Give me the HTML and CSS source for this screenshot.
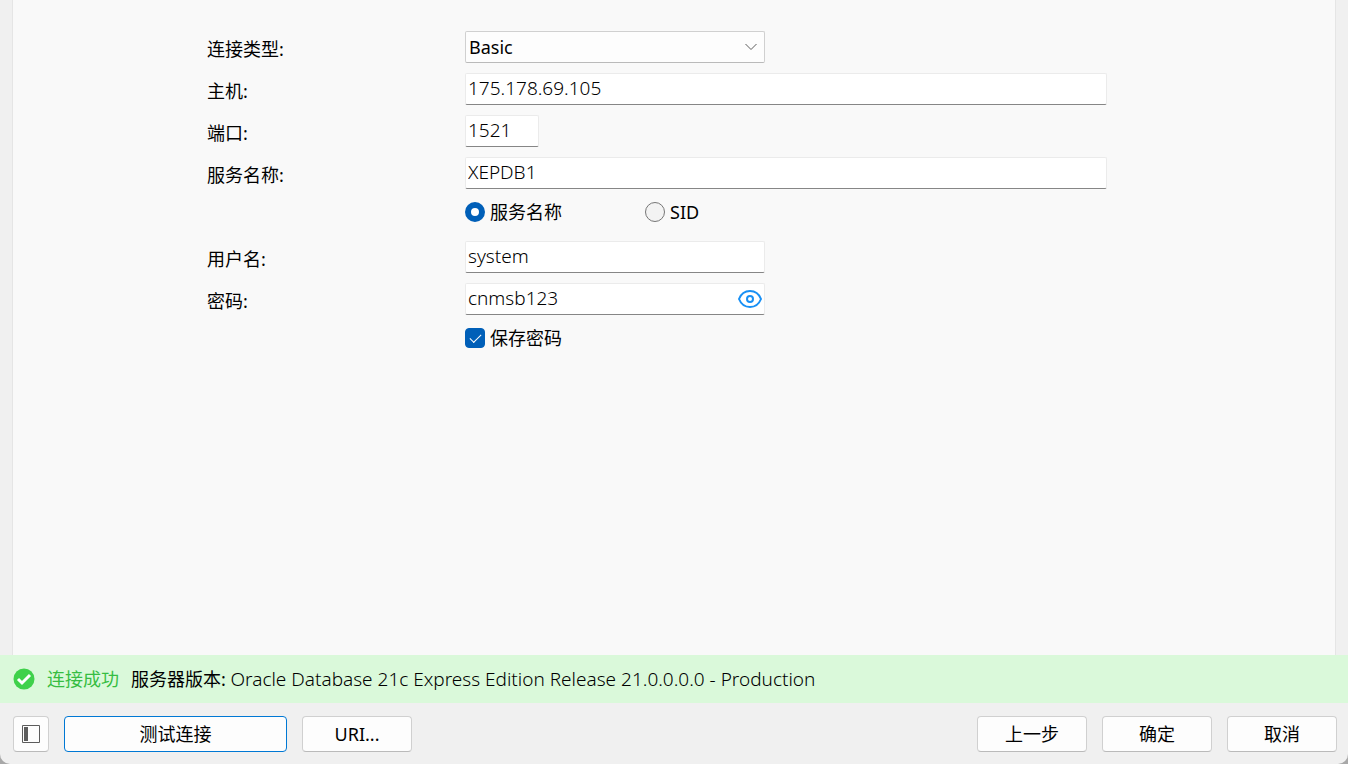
FILE: index.html
```
<!DOCTYPE html>
<html lang="zh-CN">

<head>
    <meta charset="UTF-8" />
    <meta name="viewport" content="width=device-width, initial-scale=1.0" />
    <title>连接</title>
    <link rel="stylesheet" href="styles.css">
</head>

<body>
    <form class="window">
        <!-- Connection settings -->
        <main class="panel">
            <div class="row">
                <label for="conn-type">连接类型:</label>
                <div class="select-box">
                    <select id="conn-type">
                        <option>Basic</option>
                        <option>TNS</option>
                    </select>
                    <svg class="arrow" viewBox="0 0 12 8" aria-hidden="true">
                        <path d="M.5 1L6 6.5 11.5 1" />
                    </svg>
                </div>
            </div>
            <div class="row">
                <label for="host">主机:</label>
                <input type="text" id="host" value="175.178.69.105">
            </div>
            <div class="row">
                <label for="port">端口:</label>
                <input type="text" id="port" class="short" value="1521">
            </div>
            <div class="row">
                <label for="service">服务名称:</label>
                <input type="text" id="service" value="XEPDB1">
            </div>
            <div class="row options">
                <label class="option"><input type="radio" name="mode" checked>服务名称</label>
                <label class="option"><input type="radio" name="mode">SID</label>
            </div>
            <div class="row">
                <label for="user">用户名:</label>
                <input type="text" id="user" class="medium" value="system">
            </div>
            <div class="row">
                <label for="password">密码:</label>
                <div class="password-box">
                    <input type="text" id="password" value="cnmsb123">
                    <button type="button" class="eye" aria-label="显示密码">
                        <svg viewBox="0 0 26 20" aria-hidden="true">
                            <path d="M2 10C4 5 8 2 13 2s9 3 11 8c-2 5-6 8-11 8S4 15 2 10z" />
                            <circle cx="13" cy="10" r="3" />
                        </svg>
                    </button>
                </div>
            </div>
            <div class="row options">
                <label class="option"><input type="checkbox" checked>保存密码</label>
            </div>
        </main>

        <!-- Test result -->
        <div class="status">
            <svg class="ok" viewBox="0 0 22 22" aria-hidden="true">
                <circle cx="11" cy="11" r="10.5" />
                <path d="M5 11l4 4 8-8" />
            </svg>
            <span class="result">连接成功</span>
            <span>服务器版本: <span class="version">Oracle Database 21c Express Edition Release 21.0.0.0.0 - Production</span></span>
        </div>

        <!-- Buttons -->
        <footer class="actions">
            <button type="button" class="btn toggle" aria-label="侧边栏">
                <svg viewBox="0 0 18 18" aria-hidden="true">
                    <path class="frame" d="M.5.5h17v17H.5z" />
                    <path class="side" d="M2 2h4v14H2z" />
                </svg>
            </button>
            <button type="button" class="btn test">测试连接</button>
            <button type="button" class="btn">URI...</button>
            <div class="right">
                <button type="button" class="btn">上一步</button>
                <button type="submit" class="btn">确定</button>
                <button type="button" class="btn">取消</button>
            </div>
        </footer>
    </form>
</body>

</html>
```
FILE: styles.css
```
/* Global Styles */
* {
    box-sizing: border-box;
}

body {
    margin: 0;
    background: #a8a8a8;
    color: #000;
}

body,
input,
select,
button {
    font-family: "Noto Sans", "Noto Sans CJK SC", sans-serif;
    font-size: 18px;
    line-height: 24px;
}

.window {
    display: flex;
    flex-direction: column;
    min-height: 100vh;
    background: #f0f0f0;
    border-radius: 0 0 10px 10px;
}

/* Settings panel */
.panel {
    flex: 1;
    display: flex;
    flex-direction: column;
    gap: 10px;
    margin: 0 12px;
    padding: 31px 228px 10px 194px;
    background: #f9f9f9;
    border: 1px solid #e5e5e5;
    border-width: 0 1px;
}

.row {
    display: grid;
    grid-template-columns: 258px 1fr;
    height: 32px;
}

.row > label {
    padding-top: 6px;
}

input[type="text"],
select {
    width: 100%;
    height: 32px;
    margin: 0;
    padding: 0 2px 2px;
    color: #000;
    background: #fff;
    border: 1px solid #ebebeb;
    border-bottom-color: #868686;
    border-radius: 2px;
    outline: none;
}

input[type="text"],
.version {
    font-size: 19px;
    font-weight: 350;
}

input.short {
    width: 74px;
}

input.medium,
.select-box,
.password-box {
    width: 300px;
}

.select-box,
.password-box {
    position: relative;
}

select {
    appearance: none;
    padding: 0 3px;
    background: #fdfdfd;
    border-color: #d0d0d0;
    border-bottom-color: #bababa;
}

.arrow {
    position: absolute;
    top: 12px;
    right: 8px;
    width: 12px;
    height: 8px;
    fill: none;
    stroke: #5c5c5c;
    pointer-events: none;
}

.eye {
    position: absolute;
    top: 6px;
    right: 2px;
    width: 26px;
    height: 20px;
    padding: 0;
    background: none;
    border: 0;
}

.eye svg {
    display: block;
    fill: none;
    stroke: #1890f5;
    stroke-width: 2;
}

/* Radio and tick box rows */
.row.options {
    display: flex;
    align-items: center;
    padding: 0 0 6px 258px;
}

.row .option {
    display: flex;
    align-items: center;
    gap: 5px;
    width: 180px;
    padding: 0;
}

.option input {
    flex: none;
    appearance: none;
    width: 20px;
    height: 20px;
    margin: 0;
    background: #f3f3f3;
    border: 1px solid #767676;
    border-radius: 50%;
}

.option input[type="radio"]:checked {
    background: #fff;
    border: 6px solid #005fb8;
}

.option input[type="checkbox"] {
    display: grid;
    place-items: center;
    border-radius: 4px;
}

.option input[type="checkbox"]:checked {
    background: #005fb8;
    border-color: #005fb8;
}

.option input[type="checkbox"]:checked::before {
    content: "";
    width: 10px;
    height: 5px;
    margin-bottom: 3px;
    border: solid #fff;
    border-width: 0 0 1px 1px;
    transform: rotate(-45deg);
}

/* Status bar */
.status {
    display: flex;
    align-items: center;
    gap: 12px;
    min-height: 48px;
    padding: 0 13px;
    background: #daf9da;
}

.ok {
    width: 22px;
    height: 22px;
    fill: #3fd14b;
}

.ok path {
    fill: none;
    stroke: #fff;
    stroke-width: 3;
}

.result {
    color: #36bd42;
}

/* Footer */
.actions {
    display: flex;
    gap: 15px;
    padding: 13px 11px 12px 13px;
}

.btn {
    width: 110px;
    height: 36px;
    padding: 0;
    color: #000;
    background: #fdfdfd;
    border: 1px solid #d0d0d0;
    border-bottom-color: #bababa;
    border-radius: 4px;
}

.btn:hover {
    background: #f3f9fd;
}

.toggle {
    display: grid;
    place-items: center;
    width: 36px;
}

.toggle svg {
    width: 18px;
    height: 18px;
}

.frame {
    fill: none;
    stroke: #5c5c5c;
}

.side {
    fill: #5c5c5c;
}

.test {
    width: 223px;
    border-color: #0078d4;
}

.right {
    display: flex;
    gap: 15px;
    margin-left: auto;
}
```
